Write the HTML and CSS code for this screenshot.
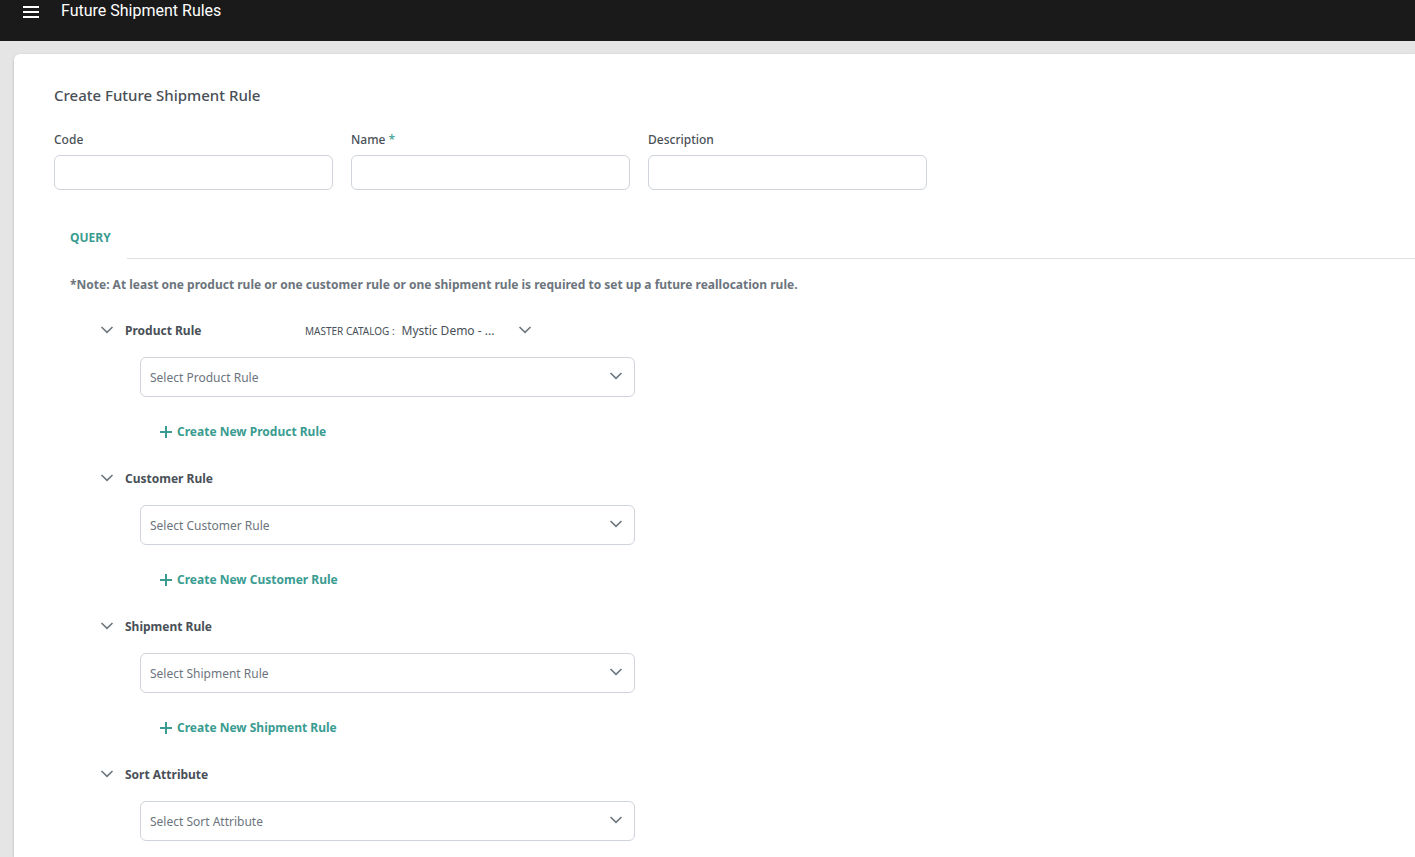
FILE: index.html
```html
<!DOCTYPE html>
<html lang="en">
<head>
<meta charset="utf-8">
<meta name="viewport" content="width=device-width, initial-scale=1">
<title>Future Shipment Rules</title>
<link rel="stylesheet" href="styles.css">
</head>
<body>
<svg width="0" height="0" class="sprite" aria-hidden="true">
  <symbol id="chevron" viewBox="0 0 14 10"><path d="M1.500 1l5.500 5.400L12.500 1" fill="none" stroke="currentColor" stroke-width="1.600"/></symbol>
  <symbol id="plus" viewBox="0 0 12 12"><path d="M6 0v12M0 6h12" fill="none" stroke="currentColor" stroke-width="2"/></symbol>
</svg>
<header class="topbar">
  <button class="menu" type="button" aria-label="Menu"><svg width="16" height="12" viewBox="0 0 16 12"><path d="M0 1h16M0 6h16M0 11h16" stroke="currentColor" stroke-width="2"/></svg></button>
  <h1 class="topbar-title">Future Shipment Rules</h1>
</header>
<main class="page">
  <form class="card">
    <h2 class="card-title">Create Future Shipment Rule</h2>
    <div class="fields">
      <div class="field"><label for="code">Code</label><input id="code" type="text"></div>
      <div class="field"><label for="name">Name <span class="required">*</span></label><input id="name" type="text" required></div>
      <div class="field"><label for="description">Description</label><input id="description" type="text"></div>
    </div>
    <nav class="tabs"><a class="tab" href="#query">QUERY</a></nav>
    <div class="query" id="query">
      <p class="note">*Note: At least one product rule or one customer rule or one shipment rule is required to set up a future reallocation rule.</p>
      <section class="rule">
        <div class="rule-head">
          <button class="toggle toggle-product" type="button"><svg class="chevron"><use href="#chevron"/></svg>Product Rule</button>
          <label class="catalog-label" for="catalog">MASTER CATALOG :</label>
          <div class="picker catalog"><select id="catalog"><option>Mystic Demo - ...</option></select><svg class="chevron"><use href="#chevron"/></svg></div>
        </div>
        <div class="picker boxed"><select aria-label="Product Rule"><option>Select Product Rule</option></select><svg class="chevron"><use href="#chevron"/></svg></div>
        <a class="create" href="#product"><svg class="plus"><use href="#plus"/></svg>Create New Product Rule</a>
      </section>
      <section class="rule">
        <div class="rule-head"><button class="toggle" type="button"><svg class="chevron"><use href="#chevron"/></svg>Customer Rule</button></div>
        <div class="picker boxed"><select aria-label="Customer Rule"><option>Select Customer Rule</option></select><svg class="chevron"><use href="#chevron"/></svg></div>
        <a class="create" href="#customer"><svg class="plus"><use href="#plus"/></svg>Create New Customer Rule</a>
      </section>
      <section class="rule">
        <div class="rule-head"><button class="toggle" type="button"><svg class="chevron"><use href="#chevron"/></svg>Shipment Rule</button></div>
        <div class="picker boxed"><select aria-label="Shipment Rule"><option>Select Shipment Rule</option></select><svg class="chevron"><use href="#chevron"/></svg></div>
        <a class="create" href="#shipment"><svg class="plus"><use href="#plus"/></svg>Create New Shipment Rule</a>
      </section>
      <section class="rule">
        <div class="rule-head"><button class="toggle" type="button"><svg class="chevron"><use href="#chevron"/></svg>Sort Attribute</button></div>
        <div class="picker boxed"><select aria-label="Sort Attribute"><option>Select Sort Attribute</option></select><svg class="chevron"><use href="#chevron"/></svg></div>
      </section>
    </div>
  </form>
</main>
</body>
</html>
```
FILE: styles.css
```css
* { box-sizing: border-box; }
body {
  margin: 0;
  min-height: 100vh;
  display: flex;
  flex-direction: column;
  background: #e5e5e5;
  color: #495057;
  font: 12px/22px "Segoe UI", "Noto Sans", "Open Sans", sans-serif;
}
h1, h2, p { margin: 0; }
button, input, select { font: inherit; color: inherit; }
button { border: 0; padding: 0; background: none; cursor: pointer; }
a { text-decoration: none; }
svg { display: block; flex: none; }
.sprite { position: absolute; }

.topbar {
  display: flex;
  align-items: flex-start;
  gap: 22px;
  height: 41px;
  padding-left: 23px;
  background: #1a1a1a;
  color: #fff;
}
.menu { padding-top: 6px; }
.topbar-title { font: 400 16px/22px Roboto, sans-serif; }

.page { flex: 1; display: flex; padding: 13px 0 0 14px; }
.card {
  flex: 1;
  padding: 29px 0 16px 40px;
  background: #fff;
  border-top-left-radius: 6px;
  box-shadow: 0 1px 3px rgba(0, 0, 0, 0.2);
}
.card-title { font-size: 15px; font-weight: 500; line-height: 24px; }

.fields { display: flex; gap: 18px; margin-top: 22px; }
.field { display: flex; flex-direction: column; gap: 4px; width: 279px; }
.field label { font-weight: 500; }
.field input {
  height: 35px;
  padding: 0 10px;
  border: 1px solid #ced4da;
  border-radius: 6px;
  background: #fff;
}
.required { color: #3f9f94; }

.tabs { display: flex; margin-top: 26px; }
.tabs::after { content: ""; flex: 1; border-bottom: 1px solid #dee2e6; }
.tab { padding: 11px 16px 10px; color: #3a9c91; font-weight: 700; }

.query { padding: 15px 0 0 16px; }
.note { color: #6c757d; font-weight: 700; margin-bottom: 24px; }
.rule { margin-bottom: 25px; padding-left: 30px; }
.rule:last-child { margin-bottom: 0; }
.rule-head { display: flex; align-items: center; height: 22px; margin-bottom: 15px; }
.toggle { display: flex; align-items: center; gap: 11px; font-weight: 700; }
.toggle-product { width: 205px; }
.chevron { width: 14px; height: 10px; color: #6c757d; }

.picker { display: grid; align-items: center; }
.picker select, .picker .chevron { grid-area: 1 / 1; }
.picker .chevron { justify-self: end; pointer-events: none; }
.picker select { width: 100%; border: 0; padding: 0; appearance: none; background: none; outline: 0; }
.catalog-label { font-size: 10px; }
.catalog { width: 130px; margin-left: 7px; }
.boxed { max-width: 495px; margin-left: 40px; color: #6c757d; }
.boxed select { height: 40px; padding: 2px 34px 0 9px; border: 1px solid #ced4da; border-radius: 6px; }
.boxed .chevron { margin-right: 12px; }

.create {
  display: flex;
  align-items: center;
  gap: 5px;
  width: fit-content;
  margin: 24px 0 0 60px;
  color: #3a9c91;
  font-weight: 700;
}
.plus { width: 12px; height: 12px; }
```
